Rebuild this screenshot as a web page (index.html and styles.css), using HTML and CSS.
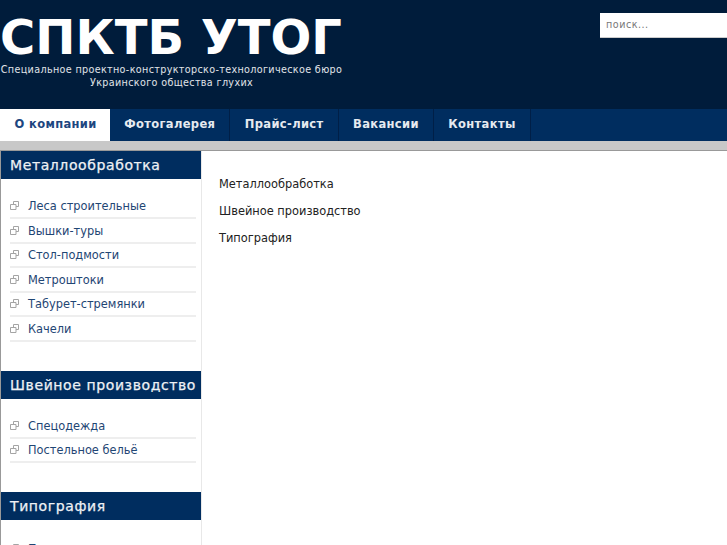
FILE: index.html
```html
<!DOCTYPE html>
<html lang="ru">
<head>
<meta charset="utf-8">
<title>СПКТБ УТОГ</title>
<link rel="stylesheet" href="styles.css">
</head>
<body>
<svg class="defs" width="0" height="0" aria-hidden="true"><symbol id="ext" viewBox="0 0 9 9"><path d="M3.5 3V.5h5v5H6M.5 3.500h5.500v5h-5.500z" fill="none" stroke="#a4a4a4" stroke-width="1"/></symbol></svg>
<header class="header">
  <div class="brand">
    <h1 class="title">СПКТБ УТОГ</h1>
    <p class="tagline">Специальное проектно-конструкторско-технологическое бюро<br>Украинского общества глухих</p>
  </div>
  <input class="search" type="text" placeholder="поиск...">
</header>
<nav class="nav">
  <a class="nav-item active">О компании</a>
  <a class="nav-item">Фотогалерея</a>
  <a class="nav-item">Прайс-лист</a>
  <a class="nav-item">Вакансии</a>
  <a class="nav-item">Контакты</a>
</nav>
<div class="band"></div>
<div class="layout">
  <aside class="sidebar">
    <h3 class="side-title">Металлообработка</h3>
    <ul class="side-list">
      <li><svg class="ico"><use href="#ext"/></svg><a>Леса строительные</a></li>
      <li><svg class="ico"><use href="#ext"/></svg><a>Вышки-туры</a></li>
      <li><svg class="ico"><use href="#ext"/></svg><a>Стол-подмости</a></li>
      <li><svg class="ico"><use href="#ext"/></svg><a>Метроштоки</a></li>
      <li><svg class="ico"><use href="#ext"/></svg><a>Табурет-стремянки</a></li>
      <li><svg class="ico"><use href="#ext"/></svg><a>Качели</a></li>
    </ul>
    <h3 class="side-title">Швейное производство</h3>
    <ul class="side-list">
      <li><svg class="ico"><use href="#ext"/></svg><a>Спецодежда</a></li>
      <li><svg class="ico"><use href="#ext"/></svg><a>Постельное бельё</a></li>
    </ul>
    <h3 class="side-title">Типография</h3>
    <ul class="side-list side-list-last">
      <li><svg class="ico"><use href="#ext"/></svg><a>Печатная продукция</a></li>
    </ul>
  </aside>
  <main class="content">
    <p>Металлообработка</p>
    <p>Швейное производство</p>
    <p>Типография</p>
  </main>
</div>
</body>
</html>
```
FILE: styles.css
```css
html, body {
  margin: 0;
  padding: 0;
  height: 545px;
  overflow: hidden;
  background: #fff;
  font-family: "DejaVu Sans", sans-serif;
}
.defs { position: absolute; }
.header {
  height: 109px;
  background: #001c3b;
  display: flex;
  justify-content: space-between;
  align-items: flex-start;
}
.brand { width: 343px; }
.title {
  margin: 8px 0 0;
  font-size: 48px;
  line-height: 58px;
  font-weight: bold;
  color: #fff;
  white-space: nowrap;
}
.tagline {
  margin: -3px 0 0;
  font-size: 9.6px;
  line-height: 13px;
  letter-spacing: 0.35px;
  color: #e0e4e9;
  text-align: center;
  white-space: nowrap;
}
.search {
  box-sizing: border-box;
  margin-top: 13px;
  width: 127px;
  height: 25px;
  padding: 0 6px 2px;
  border: 0;
  border-bottom: 1px solid #ccc;
  background: #fff;
  font: 9.600px "DejaVu Sans", sans-serif;
  letter-spacing: 0.5px;
  outline: none;
}
.search::placeholder { color: #777; opacity: 1; }
.nav {
  display: flex;
  height: 32px;
  background: #002d5f;
}
.nav-item {
  box-sizing: border-box;
  padding: 0 14px 0 14.500px;
  line-height: 31px;
  font-size: 11.500px;
  font-weight: bold;
  letter-spacing: 0.35px;
  color: #e6eaf0;
  border-right: 1px solid #001f47;
}
.nav-item.active {
  padding-right: 13px;
  background: #fff;
  color: #1d4680;
  border-right: 0;
}
.band {
  height: 9px;
  background: #c8c8c8;
  border-bottom: 1px solid #999;
}
.layout { display: flex; }
.sidebar {
  box-sizing: border-box;
  width: 202px;
  flex: none;
  border-left: 1px solid #999;
  border-right: 1px solid #e8e8e8;
}
.side-title {
  margin: 0;
  height: 28px;
  padding-left: 9px;
  background: #002d5f;
  color: #eef1f5;
  font-size: 14px;
  font-weight: normal;
  line-height: 28px;
  letter-spacing: 0.6px;
  white-space: nowrap;
  -webkit-text-stroke: 0.25px #eef1f5;
}
.side-list {
  list-style: none;
  margin: 15.500px 5px 29px 9px;
  padding: 0;
}
.side-list-last { margin-top: 17px; }
.side-list li {
  display: flex;
  align-items: center;
  padding-top: 1px;
  height: 21.500px;
  border-bottom: 2px solid #eee;
  font-size: 11.400px;
  color: #1f4674;
}
.ico { width: 9px; height: 9px; margin: -1px 9px 0 0; flex: none; }
.content {
  padding: 25.500px 0 0 17px;
  font-size: 11.400px;
  color: #222;
}
.content p { margin: 0 0 12px; line-height: 15px; }
```
